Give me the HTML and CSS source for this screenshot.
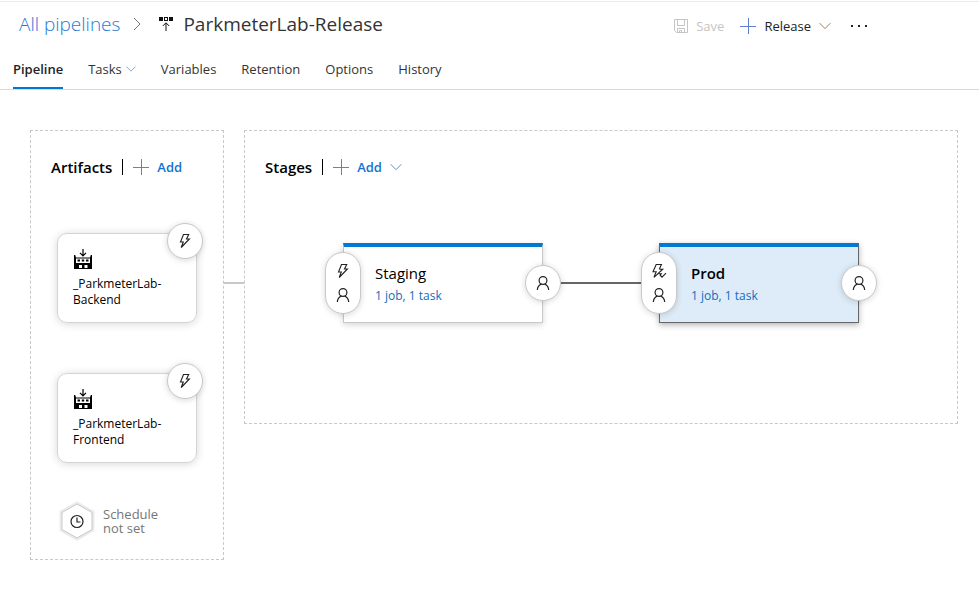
FILE: index.html
```html
<!DOCTYPE html>
<html lang="en">
<head>
<meta charset="utf-8">
<meta name="viewport" content="width=device-width, initial-scale=1">
<title>ParkmeterLab-Release</title>
<link rel="stylesheet" href="styles.css">
</head>
<body>
<svg class="sprite" aria-hidden="true">
  <symbol id="chevron-down" viewBox="0 0 12 8"><path d="M.6 1.200 6 6.600l5.400-5.400" fill="none" stroke="currentColor"/></symbol>
  <symbol id="plus" viewBox="0 0 16 16"><path d="M8.500 0v16M0 8.500h16" fill="none" stroke="currentColor"/></symbol>
  <symbol id="bolt" viewBox="0 0 16 16"><path d="M6.500 1.500h5.200L9.500 6h2.900L4.200 14.500 6.300 9H3.500z" fill="none" stroke="currentColor" stroke-width="1.100"/></symbol>
  <symbol id="bolt-check" viewBox="0 0 16 16"><path d="M8.300 6.200h3.400L3 14.300 5.200 8.800H2L5.200 1.500h5.200L8.300 6.200M7.500 10.700h2.800l-1.500 2M9.500 12.500l1.500 1.600 4-4" fill="none" stroke="currentColor" stroke-width="1.100"/></symbol>
  <symbol id="person" viewBox="0 0 16 16"><circle cx="8" cy="5.500" r="3.900" fill="none" stroke="currentColor" stroke-width="1.200"/><path d="M2.300 15c.2-3.200 1.700-5 4-5.900M13.700 15c-.2-3.200-1.700-5-4-5.900" fill="none" stroke="currentColor" stroke-width="1.200"/></symbol>
  <symbol id="build" viewBox="0 0 20 20"><path d="M10 0v6.500M7 3.800l3 3 3-3" fill="none" stroke="currentColor" stroke-width="1.200"/><path fill="currentColor" fill-rule="evenodd" d="M1 6h1.200L3 8.500h14L17.800 6H19v14H1zM3 9.500V14h14V9.500zM6 16v3h3v-3zm5.500 0v3h3v-3z"/><path fill="currentColor" d="M4.500 10.500H7v2H4.500zM8.800 10.500h2.400v2H8.800zM13 10.500h2.500v2H13z"/></symbol>
</svg>

<header class="header">
  <div class="title-row">
    <nav class="crumbs" aria-label="Breadcrumb">
      <a class="crumb-link" href="#">All pipelines</a>
      <svg class="crumb-sep" viewBox="0 0 8 14" aria-hidden="true"><path d="m1 1 6 6-6 6" fill="none" stroke="currentColor"/></svg>
      <svg class="release-icon" viewBox="0 0 14 16" aria-hidden="true"><path fill="currentColor" fill-rule="evenodd" d="M0 1h4v4H0zM5 1h4v4H5zm1 1v2h2V2zM10 1h4v4h-4z"/><path d="M7 15V7M3.800 10 7 6.800l3.200 3.200" fill="none" stroke="currentColor"/></svg>
      <h1 class="title">ParkmeterLab-Release</h1>
    </nav>
    <div class="commands">
      <button class="command command-save" type="button" disabled>
        <svg class="save-icon" viewBox="0 0 14 14" aria-hidden="true"><path d="M.5.5h13v13h-11l-2-2zM3.500.5v6h7v-6M3.500 13.500v-4h7v4M5.500 13.500v-2h2v2" fill="none" stroke="currentColor"/></svg>
        Save
      </button>
      <button class="command command-release" type="button">
        <svg class="plus-icon" aria-hidden="true"><use href="#plus"/></svg>
        Release
        <svg class="chevron chevron-warm" aria-hidden="true"><use href="#chevron-down"/></svg>
      </button>
      <button class="command more" type="button" aria-label="More actions">
        <svg class="more-icon" viewBox="0 0 18 4" aria-hidden="true"><path d="M1 1h2v2H1zM8 1h2v2H8zM15 1h2v2h-2z" fill="currentColor"/></svg>
      </button>
    </div>
  </div>
  <nav class="tabs" aria-label="Release definition">
    <a class="tab tab-active" href="#" aria-current="page">Pipeline</a>
    <a class="tab" href="#">Tasks <svg class="chevron chevron-tab" aria-hidden="true"><use href="#chevron-down"/></svg></a>
    <a class="tab" href="#">Variables</a>
    <a class="tab" href="#">Retention</a>
    <a class="tab" href="#">Options</a>
    <a class="tab" href="#">History</a>
  </nav>
</header>

<main class="canvas">
  <section class="panel artifacts">
    <div class="panel-head">
      <h2 class="panel-title">Artifacts</h2>
      <button class="add" type="button"><svg class="plus-icon" aria-hidden="true"><use href="#plus"/></svg>Add</button>
    </div>
    <div class="artifact-list">
      <article class="artifact">
        <svg class="build-icon" aria-hidden="true"><use href="#build"/></svg>
        <p class="artifact-name">_ParkmeterLab-<br>Backend</p>
        <button class="round artifact-trigger" type="button" aria-label="Continuous deployment trigger"><svg class="icon" aria-hidden="true"><use href="#bolt"/></svg></button>
      </article>
      <article class="artifact">
        <svg class="build-icon" aria-hidden="true"><use href="#build"/></svg>
        <p class="artifact-name">_ParkmeterLab-<br>Frontend</p>
        <button class="round artifact-trigger" type="button" aria-label="Continuous deployment trigger"><svg class="icon" aria-hidden="true"><use href="#bolt"/></svg></button>
      </article>
    </div>
    <button class="schedule" type="button">
      <svg class="schedule-icon" viewBox="0 0 36 40" aria-hidden="true">
        <path d="M18 2 34 11v18L18 38 2 29V11z" fill="#fff" stroke="#ebebeb" stroke-width="3"/>
        <path d="M18 3 33 11.500v17L18 37 3 28.500v-17z" fill="#fff" stroke="#c8c8c8"/>
        <circle cx="18" cy="20.500" r="6" fill="none" stroke="#222" stroke-width="1.200"/>
        <path d="M18 16.500v4.500h3.500" fill="none" stroke="#222" stroke-width="1.200"/>
      </svg>
      <span>Schedule<br>not set</span>
    </button>
  </section>

  <div class="panel-link"></div>

  <section class="panel stages">
    <div class="panel-head">
      <h2 class="panel-title">Stages</h2>
      <button class="add" type="button"><svg class="plus-icon" aria-hidden="true"><use href="#plus"/></svg>Add<svg class="chevron" aria-hidden="true"><use href="#chevron-down"/></svg></button>
    </div>
    <div class="flow">
      <article class="stage">
        <h3 class="stage-name">Staging</h3>
        <a class="stage-tasks" href="#">1 job, 1 task</a>
        <button class="pill" type="button" aria-label="Pre-deployment conditions"><svg class="icon" aria-hidden="true"><use href="#bolt"/></svg><svg class="icon" aria-hidden="true"><use href="#person"/></svg></button>
        <button class="round post" type="button" aria-label="Post-deployment conditions"><svg class="icon" aria-hidden="true"><use href="#person"/></svg></button>
      </article>
      <div class="stage-link"></div>
      <article class="stage stage-selected">
        <h3 class="stage-name">Prod</h3>
        <a class="stage-tasks" href="#">1 job, 1 task</a>
        <button class="pill" type="button" aria-label="Pre-deployment conditions"><svg class="icon" aria-hidden="true"><use href="#bolt-check"/></svg><svg class="icon" aria-hidden="true"><use href="#person"/></svg></button>
        <button class="round post" type="button" aria-label="Post-deployment conditions"><svg class="icon" aria-hidden="true"><use href="#person"/></svg></button>
      </article>
    </div>
  </section>
</main>
</body>
</html>
```
FILE: styles.css
```css
* { box-sizing: border-box; }

body {
  margin: 0;
  background: #fff;
  color: #333;
  font: 13px/16px "Open Sans", "Noto Sans", sans-serif;
}

h1, h2, h3, p { margin: 0; }
a { color: inherit; text-decoration: none; }
svg { display: block; flex: none; }

button {
  margin: 0;
  padding: 0;
  border: 0;
  background: none;
  color: inherit;
  font: inherit;
  cursor: pointer;
}

.sprite { position: absolute; width: 0; height: 0; }

/* Header */
.header {
  margin-top: 1px;
  border-top: 1px solid #eaeaea;
  border-bottom: 1px solid #dadada;
}

.title-row {
  display: flex;
  align-items: center;
  justify-content: space-between;
  height: 48px;
  padding: 0 111px 0 19px;
}

.crumbs { display: flex; align-items: center; padding-bottom: 4px; }
.crumb-link { color: #1f7bd6; font-size: 19px; line-height: 28px; font-weight: 300; }
.crumb-sep { width: 8px; height: 14px; margin: 0 18px 0 13px; color: #777; }
.release-icon { width: 14px; height: 16px; margin-right: 10px; color: #111; }
.title { font-size: 19px; line-height: 28px; font-weight: 400; }

.commands { display: flex; align-items: center; }
.command { display: flex; align-items: center; gap: 8px; color: #222; }
.command-save { color: #c4c4c4; margin-right: 16px; }
.command-release { margin-right: 19px; }
.save-icon { width: 14px; height: 14px; }
.plus-icon { width: 16px; height: 16px; color: #5f7fd0; }
.chevron { width: 12px; height: 8px; color: #6a8bc8; }
.chevron-warm { color: #a07c58; }
.more-icon { width: 18px; height: 4px; }

.tabs {
  display: flex;
  gap: 25px;
  height: 39px;
  padding: 0 13px;
}

.tab {
  display: flex;
  align-items: center;
  gap: 4px;
  border-bottom: 2px solid transparent;
}

.tab-active { border-color: #0078d4; color: #222; font-weight: 600; }
.chevron-tab { width: 10px; color: #6f94b5; }

/* Canvas */
.canvas {
  display: flex;
  align-items: flex-start;
  padding: 40px 21px 40px 30px;
}

.panel { border: 1px dashed #c8c8c8; }
.artifacts { flex: none; width: 194px; padding: 28px 20px 18px; }
.stages { flex: 1; min-width: 0; padding: 28px 20px 100px; }
.panel-link { flex: none; width: 20px; height: 2px; margin-top: 152px; background: #c8c8c8; }

.panel-head { display: flex; align-items: center; color: #000; }
.panel-title {
  padding-right: 10px;
  border-right: 1px solid #000;
  font-size: 15px;
  line-height: 16px;
  font-weight: 600;
}
.add {
  display: flex;
  align-items: center;
  gap: 8px;
  margin-left: 10px;
  color: #0f75d1;
  font-weight: 600;
}

/* Artifacts */
.artifact-list {
  display: flex;
  flex-direction: column;
  gap: 50px;
  margin: 58px 6px 0;
}

.artifact {
  position: relative;
  height: 90px;
  padding: 15px 15px 0;
  border: 1px solid #d4d4d4;
  border-radius: 10px;
  box-shadow: 0 1px 8px rgba(0, 0, 0, .16);
  color: #000;
  font-size: 12px;
}
.build-icon { width: 20px; height: 20px; margin-bottom: 7px; }

.round, .pill {
  display: flex;
  align-items: center;
  justify-content: center;
  width: 36px;
  border: 1px solid #c8c8c8;
  border-radius: 18px;
  background: #fff;
  box-shadow: 0 1px 6px rgba(0, 0, 0, .16);
  color: #222;
}
.round { height: 36px; }
.icon { width: 16px; height: 16px; }
.artifact-trigger { position: absolute; top: -11px; right: -7px; }

.schedule {
  display: flex;
  align-items: center;
  gap: 8px;
  margin: 38px 0 0 8px;
  color: #767676;
  line-height: 14px;
  text-align: left;
}
.schedule-icon { width: 36px; height: 40px; }

/* Stages */
.flow {
  display: flex;
  align-items: center;
  margin: 68px 0 0 78px;
}

.stage {
  position: relative;
  flex: none;
  width: 200px;
  height: 80px;
  padding: 16px 31px 0;
  border: 1px solid #c8c8c8;
  border-top: 4px solid #0078d4;
  background: #fff;
  box-shadow: 0 2px 6px rgba(0, 0, 0, .16);
}
.stage-selected {
  border-color: #0078d4 #666 #666;
  background: #deecf9;
  box-shadow: 0 2px 6px rgba(0, 0, 0, .3);
}
.stage-name { color: #000; font-size: 15px; line-height: 20px; font-weight: 400; }
.stage-selected .stage-name { font-weight: 600; }
.stage-tasks { display: block; margin-top: 5px; color: #106ebe; font-size: 12px; }
.stage-link { flex: none; width: 116px; height: 2px; background: #666; }

.pill {
  position: absolute;
  top: 5px;
  left: -19px;
  flex-direction: column;
  gap: 8px;
  height: 62px;
}
.post { position: absolute; top: 18px; right: -19px; }
```
